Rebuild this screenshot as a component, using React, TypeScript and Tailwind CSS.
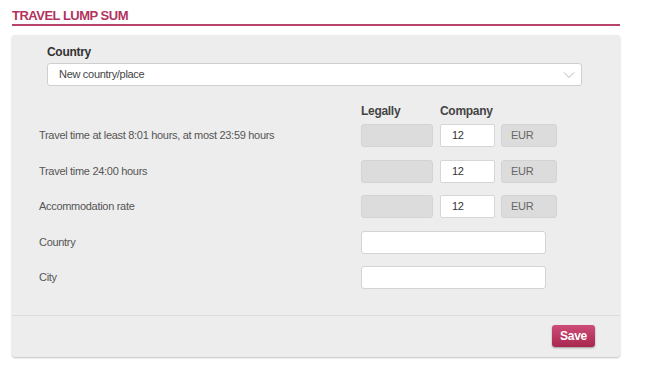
const font = "font-['Liberation_Sans',Arial,sans-serif]";

type Row = { label: string; value: string };

const rates: Row[] = [
  { label: 'Travel time at least 8:01 hours, at most 23:59 hours', value: '12' },
  { label: 'Travel time 24:00 hours', value: '12' },
  { label: 'Accommodation rate', value: '12' },
];

const Chevron = () => (
  <svg width="12" height="8" viewBox="0 0 12 8" fill="none">
    <path d="M1 1.5L6 6.5L11 1.5" stroke="#b5b5b5" strokeWidth="1" />
  </svg>
);

const App = () => {
  return (
    <div className={`w-[646px] h-[381px] bg-white ${font}`}>
      <div className="pl-3 pr-[26px] pt-[9px]">
        {/* section title */}
        <h2 className="text-[13px] leading-[14px] font-bold tracking-[-0.5px] text-[#b3325e] pb-[1px] border-b-2 border-[#b8446c]">
          TRAVEL LUMP SUM
        </h2>

        <div className="mt-[9px] w-[608px] bg-[#ededed] rounded-[3px] shadow-[0_1px_2px_rgba(0,0,0,0.25)]">
          <div className="pt-[9px] pl-[35px] pr-[38px]">
            <label className="block text-[12px] leading-[16px] font-bold tracking-[-0.3px] text-[#333]">Country</label>
            <div className="mt-[3px] h-[23px] bg-white border border-[#cfcfcf] rounded-[3px] flex items-center justify-between pl-[11px] pr-[6px]">
              <span className="text-[11px] tracking-[-0.3px] text-[#444]">New country/place</span>
              <Chevron />
            </div>
          </div>

          <div className="pl-[27px] mt-[17px] text-[11px] tracking-[-0.3px]">
            <div className="flex h-[16px] items-center text-[12px] font-bold text-[#444]">
              <div className="w-[322px]" />
              <div className="w-[79px]">Legally</div>
              <div>Company</div>
            </div>

            <div className="mt-[5px] flex flex-col gap-[12.5px]">
              {rates.map((r) => (
                <div key={r.label} className="flex items-center h-[23px]">
                  <div className="w-[322px] text-[#555]">{r.label}</div>
                  <div className="w-[72px] h-[23px] bg-[#dcdcdc] border border-[#d3d3d3] rounded-[3px]" />
                  <div className="ml-[7px] w-[55px] h-[23px] bg-white border border-[#d6d6d6] rounded-[2px] flex items-center pl-[11px] text-[#333]">
                    {r.value}
                  </div>
                  <div className="ml-[6px] w-[56px] h-[23px] bg-[#dcdcdc] border border-[#d3d3d3] rounded-[3px] flex items-center pl-[9px] text-[#666]">
                    EUR
                  </div>
                </div>
              ))}
              {['Country', 'City'].map((l) => (
                <div key={l} className="flex items-center h-[23px]">
                  <div className="w-[322px] text-[#555]">{l}</div>
                  <div className="w-[185px] h-[23px] bg-white border border-[#d3d3d3] rounded-[3px]" />
                </div>
              ))}
            </div>
          </div>

          <div className="mt-[26px] border-t border-[#dadada] flex justify-end pr-[25px] pt-[9px] pb-[10px]">
            <button className="w-[43px] h-[22px] rounded-[3px] bg-gradient-to-b from-[#cd4d78] to-[#a8264f] text-white text-[12px] font-bold tracking-[-0.3px] shadow-[0_1px_2px_rgba(0,0,0,0.35)]">
              Save
            </button>
          </div>
        </div>
      </div>
    </div>
  );
};

export default App;
